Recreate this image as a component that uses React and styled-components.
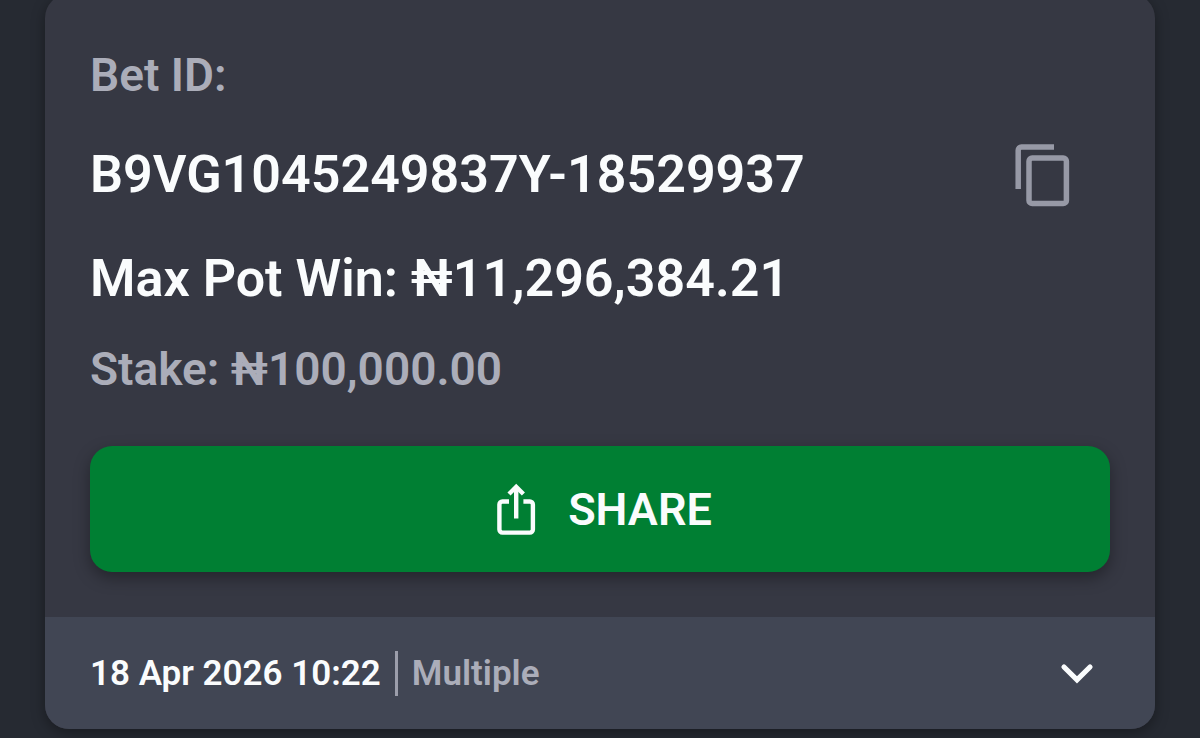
import styled, { createGlobalStyle } from 'styled-components';

const GlobalStyle = createGlobalStyle`
  * {
    box-sizing: border-box;
  }

  body {
    margin: 0;
    overflow: hidden;
    background-color: #262a32;
    font-family: Roboto, "Noto Sans", sans-serif;
    font-weight: 600;
  }
`;

const Page = styled.main`
  display: flow-root;
  min-height: 100vh;
  padding: 0 45px 8px;
`;

const Card = styled.article`
  margin-top: -6px;
  border-radius: 24px;
  background-color: #363843;
  box-shadow: 0 4px 14px rgba(0, 0, 0, 0.35);
`;

const CardBody = styled.div`
  display: flex;
  flex-direction: column;
  padding: 53px 45px 45px;
`;

const Text = styled.p`
  margin: 0;
  font-size: 46px;
  line-height: 56px;
  color: #abadb9;
`;

const StrongText = styled(Text)`
  font-size: 52px;
  line-height: 64px;
  color: #fafcfd;
`;

const IdRow = styled.div`
  display: flex;
  align-items: center;
  justify-content: space-between;
  margin: 40px 0;
  padding-right: 40px;
`;

const CopyButton = styled.button`
  display: flex;
  padding: 0;
  border: none;
  background: none;
  color: #9799a6;
  cursor: pointer;
`;

const Stake = styled(Text)`
  margin: 30px 0 49px;
`;

const ShareButton = styled.button`
  display: flex;
  align-items: center;
  justify-content: center;
  gap: 32px;
  height: 126px;
  padding: 0 0 0 8px;
  border: none;
  border-radius: 22px;
  background-color: #007f33;
  box-shadow: 0 6px 16px rgba(0, 0, 0, 0.35);
  font: inherit;
  font-size: 45px;
  color: #fafcfd;
  cursor: pointer;
`;

const CardFooter = styled.footer`
  display: flex;
  align-items: center;
  height: 112px;
  padding: 0 60px 0 45px;
  border-radius: 0 0 24px 24px;
  background-color: #414654;
  font-size: 35px;
`;

const BetDate = styled.time`
  color: #fafcfd;
`;

const BetType = styled.span`
  flex: 1;
  margin-left: 14px;
  padding-left: 14px;
  border-left: 3px solid #9c9eab;
  line-height: 45px;
  color: #abadb9;
`;

const ToggleButton = styled(CopyButton)`
  color: #fafcfd;
`;

const CopyIcon = () => (
  <svg width="56" height="64" viewBox="0 0 56 64" fill="none" stroke="currentColor" strokeWidth="5.5" aria-hidden="true">
    <path d="M4.2 46V7.2a3.2 3.2 0 0 1 3.2-3.2H40" />
    <rect x="15" y="15" width="37.4" height="45.6" rx="3.2" />
  </svg>
);

const ShareIcon = () => (
  <svg width="40" height="54" viewBox="0 0 40 54" fill="none" stroke="currentColor" strokeWidth="4.4" aria-hidden="true">
    <path d="M13 19.5H6.4a3 3 0 0 0-3 3v25.1a3 3 0 0 0 3 3h27.5a3 3 0 0 0 3-3V22.5a3 3 0 0 0-3-3h-6.5" />
    <path d="M20.2 36.5V5" />
    <path d="M13 12 20.2 4.8l7.2 7.2" />
  </svg>
);

const ChevronIcon = () => (
  <svg width="36" height="24" viewBox="0 0 36 24" fill="none" stroke="currentColor" strokeWidth="5.2" strokeLinecap="round" aria-hidden="true">
    <path d="M5 6 18 18.8 31 6" />
  </svg>
);

const App = () => {
  return (
    <>
      <GlobalStyle />
      <Page>
        <Card>
          <CardBody>
            <Text>Bet ID:</Text>
            <IdRow>
              <StrongText>B9VG1045249837Y-18529937</StrongText>
              <CopyButton type="button" aria-label="Copy bet ID">
                <CopyIcon />
              </CopyButton>
            </IdRow>
            <StrongText>Max Pot Win: ₦11,296,384.21</StrongText>
            <Stake>Stake: ₦100,000.00</Stake>
            <ShareButton type="button">
              <ShareIcon />
              SHARE
            </ShareButton>
          </CardBody>
          <CardFooter>
            <BetDate dateTime="2026-04-18T10:22">18 Apr 2026 10:22</BetDate>
            <BetType>Multiple</BetType>
            <ToggleButton type="button" aria-label="Show bet details">
              <ChevronIcon />
            </ToggleButton>
          </CardFooter>
        </Card>
      </Page>
    </>
  )
};

export default App;
